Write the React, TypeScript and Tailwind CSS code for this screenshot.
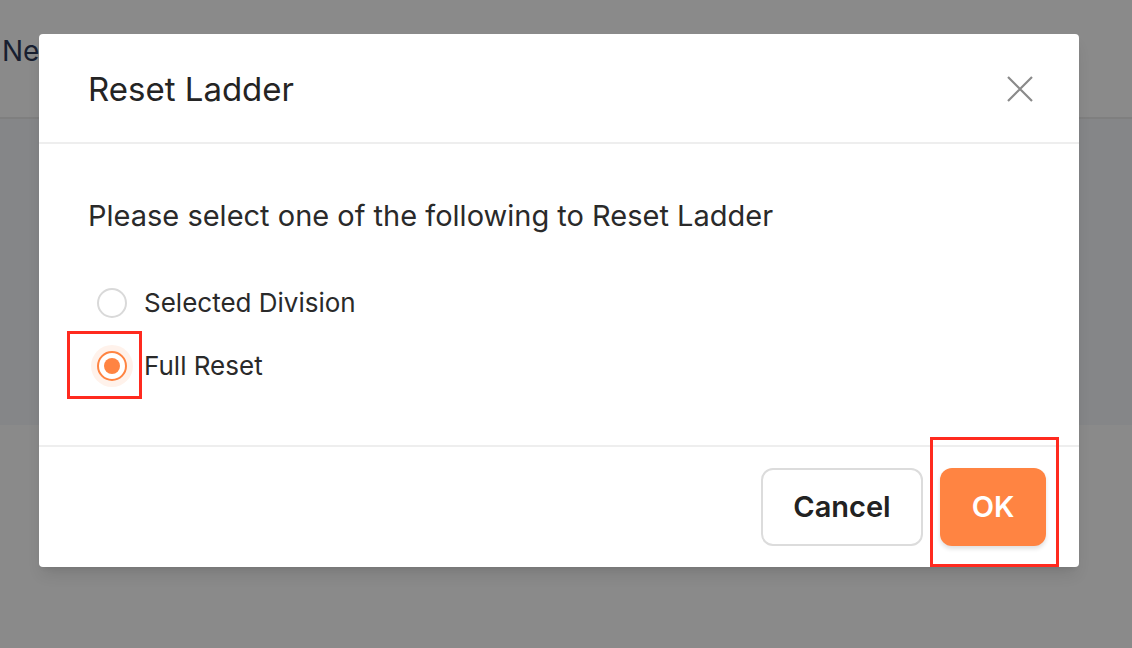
export default function App() {
  return (
    <div className="relative w-[1132px] h-[648px] overflow-hidden bg-white font-['Inter',sans-serif]">
      {/* underlying page */}
      <div className="h-[119px] border-b-2 border-[#eaeaea] flex items-center px-[2px] pb-[16px]">
        <span className="text-[28px] text-[#2e3a59]">New Ladder</span>
      </div>
      <div className="h-[306px] bg-[#f6f8fb]" />

      {/* backdrop */}
      <div className="absolute inset-0 bg-black/[0.46]" />

      {/* modal */}
      <div className="absolute left-[39px] top-[34px] w-[1040px] bg-white rounded-[4px] shadow-lg">
        <div className="h-[110px] pt-[2px] flex items-center justify-between pl-[49px] pr-[44px] border-b-2 border-[#eeeeee]">
          <h2 className="text-[33px] text-[#242424] leading-none">Reset Ladder</h2>
          <svg width="26" height="26" viewBox="0 0 26 26" className="mr-[2px]">
            <path d="M1 1L25 25M25 1L1 25" stroke="#8a8a8a" strokeWidth="2.2" fill="none" />
          </svg>
        </div>

        <div className="pl-[49px] pt-[54px] pb-[64px] border-b-2 border-[#eeeeee]">
          <p className="text-[29px] text-[#2a2a2a] leading-[36px]">
            Please select one of the following to Reset Ladder
          </p>
          <div className="mt-[54px] flex flex-col gap-[33px]">
            <label className="flex items-center gap-[17px]">
              <span className="ml-[9px] w-[30px] h-[30px] rounded-full border-2 border-[#d9d9d9] bg-white" />
              <span className="text-[26px] text-[#2a2a2a] leading-[30px]">Selected Division</span>
            </label>
            <label className="flex items-center gap-[17px]">
              <span className="ml-[9px] w-[30px] h-[30px] rounded-full border-2 border-[#ff8442] bg-white flex items-center justify-center ring-[6px] ring-[#fff2eb]">
                <span className="w-[16px] h-[16px] rounded-full bg-[#ff8442]" />
              </span>
              <span className="text-[26px] text-[#2a2a2a] leading-[30px]">Full Reset</span>
            </label>
          </div>
        </div>

        <div className="h-[120px] flex items-center justify-end gap-[17px] pr-[33px]">
          <button className="w-[162px] h-[78px] rounded-[12px] border-2 border-[#dcdcdc] bg-white text-[29px] font-semibold text-[#222]">
            Cancel
          </button>
          <button className="w-[106px] h-[78px] rounded-[12px] bg-[#ff8442] text-[29px] font-semibold text-white shadow-[0_3px_4px_rgba(0,0,0,0.12)]">
            OK
          </button>
        </div>
      </div>

      {/* annotation boxes */}
      <div className="absolute left-[67px] top-[331px] w-[75px] h-[68px] border-[3px] border-[#ff2a1f]" />
      <div className="absolute left-[930px] top-[437px] w-[129px] h-[130px] border-[3px] border-[#ff2a1f]" />
    </div>
  );
}
